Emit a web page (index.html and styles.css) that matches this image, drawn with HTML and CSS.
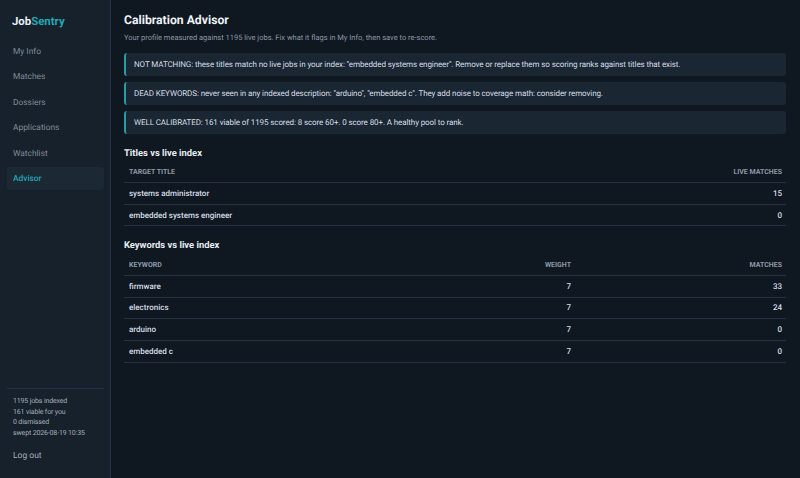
FILE: index.html
```html
<!DOCTYPE html>
<html lang="en">

<head>
    <meta charset="UTF-8">
    <meta name="viewport" content="width=device-width, initial-scale=1.0">
    <title>Calibration Advisor - JobSentry</title>
    <link rel="stylesheet" href="styles.css">
</head>

<body>
    <aside class="sidebar">
        <div class="brand">Job<span class="brand-accent">Sentry</span></div>
        <nav class="nav">
            <a class="nav-link" href="#">My Info</a>
            <a class="nav-link" href="#">Matches</a>
            <a class="nav-link" href="#">Dossiers</a>
            <a class="nav-link" href="#">Applications</a>
            <a class="nav-link" href="#">Watchlist</a>
            <a class="nav-link active" href="#">Advisor</a>
        </nav>
        <div class="sidebar-foot">
            <div class="stats">
                <div>1195 jobs indexed</div>
                <div>161 viable for you</div>
                <div>0 dismissed</div>
                <div>swept 2026-08-19 10:35</div>
            </div>
            <a class="logout" href="#">Log out</a>
        </div>
    </aside>

    <main class="content">
        <h1 class="page-title">Calibration Advisor</h1>
        <p class="page-sub">Your profile measured against 1195 live jobs. Fix what it flags in My Info, then save to re-score.</p>

        <div class="notice">NOT MATCHING: these titles match no live jobs in your index: "embedded systems engineer". Remove or replace them so scoring ranks against titles that exist.</div>
        <div class="notice">DEAD KEYWORDS: never seen in any indexed description: "arduino", "embedded c". They add noise to coverage math: consider removing.</div>
        <div class="notice">WELL CALIBRATED: 161 viable of 1195 scored: 8 score 60+. 0 score 80+. A healthy pool to rank.</div>

        <h2 class="section-title">Titles vs live index</h2>
        <table class="data-table">
            <thead>
                <tr>
                    <th>Target title</th>
                    <th class="num">Live matches</th>
                </tr>
            </thead>
            <tbody>
                <tr>
                    <td>systems administrator</td>
                    <td class="num">15</td>
                </tr>
                <tr>
                    <td>embedded systems engineer</td>
                    <td class="num">0</td>
                </tr>
            </tbody>
        </table>

        <h2 class="section-title">Keywords vs live index</h2>
        <table class="data-table">
            <thead>
                <tr>
                    <th>Keyword</th>
                    <th class="num col-weight">Weight</th>
                    <th class="num col-matches">Matches</th>
                </tr>
            </thead>
            <tbody>
                <tr>
                    <td>firmware</td>
                    <td class="num">7</td>
                    <td class="num">33</td>
                </tr>
                <tr>
                    <td>electronics</td>
                    <td class="num">7</td>
                    <td class="num">24</td>
                </tr>
                <tr>
                    <td>arduino</td>
                    <td class="num">7</td>
                    <td class="num">0</td>
                </tr>
                <tr>
                    <td>embedded c</td>
                    <td class="num">7</td>
                    <td class="num">0</td>
                </tr>
            </tbody>
        </table>
    </main>
</body>

</html>
```

FILE: styles.css
```css
* {
    box-sizing: border-box;
}

body {
    background-color: #0f1720;
    color: #d5dde5;
    font-family: Roboto, "Noto Sans", sans-serif;
    font-size: 9px;
    text-rendering: geometricPrecision;
    margin: 0;
    display: flex;
    height: 478px;
    overflow: hidden;
}

.sidebar {
    width: 111px;
    background-color: #16212b;
    border-right: 1px solid #243140;
    padding: 14px 6px 14px 7px;
    display: flex;
    flex-direction: column;
}

.brand {
    font-size: 11.4px;
    font-weight: 700;
    color: #e6edf3;
    padding: 0 5px;
    margin-bottom: 11.5px;
    line-height: 15px;
}

.brand-accent {
    color: #22a6b3;
}

.nav {
    display: flex;
    flex-direction: column;
    gap: 3px;
}

.nav-link {
    color: #7f8c99;
    font-size: 8.4px;
    line-height: 12px;
    padding: 5.5px 6px;
    border-radius: 3px;
    text-decoration: none;
    height: 22.4px;
}

.nav-link.active {
    color: #22a6b3;
    font-weight: 500;
    background-color: #1c2833;
}

.sidebar-foot {
    margin-top: auto;
}

.stats {
    border-top: 1px solid #243140;
    padding: 7px 6px 0;
    color: #a4afba;
    font-size: 7px;
    letter-spacing: -0.15px;
    line-height: 10.4px;
    white-space: nowrap;
}

.logout {
    display: block;
    color: #a4afba;
    font-size: 8.5px;
    line-height: 12px;
    padding: 0 6px;
    margin-top: 12px;
    margin-bottom: 2px;
    text-decoration: none;
}

.content {
    flex: 1;
    padding: 12px 14px 12px 13px;
}

.page-title {
    font-size: 12.2px;
    font-weight: 700;
    color: #eef3f7;
    line-height: 17px;
    margin: 0 0 3px;
}

.page-sub {
    font-size: 7.5px;
    color: #8b98a5;
    line-height: 11px;
    margin: 0 0 10px;
}

.notice {
    background-color: #1a2631;
    border-left: 2px solid #2a9aa5;
    border-radius: 3px;
    color: #d5dde5;
    font-size: 8px;
    letter-spacing: -0.1px;
    line-height: 11px;
    padding: 6px 8px;
    height: 23px;
    margin-bottom: 6px;
}

.section-title {
    font-size: 9.4px;
    font-weight: 700;
    color: #e6edf3;
    line-height: 13px;
    margin: 12.5px 0 3px;
}

.data-table + .section-title {
    margin-top: 13px;
}

.data-table {
    width: 100%;
    border-collapse: collapse;
}

.data-table th {
    color: #8b98a5;
    font-size: 7px;
    font-weight: 700;
    text-align: left;
    text-transform: uppercase;
    padding: 4px 4px 5px 5px;
    height: 20px;
    border-bottom: 1px solid #243140;
}

.data-table td {
    color: #d5dde5;
    font-size: 8px;
    font-weight: 500;
    padding: 4px 4px 4px 5px;
    height: 21.7px;
    border-bottom: 1px solid #243140;
}

.data-table .num {
    text-align: right;
}

.col-weight {
    width: 200px;
}

.col-matches {
    width: 211px;
}
```
